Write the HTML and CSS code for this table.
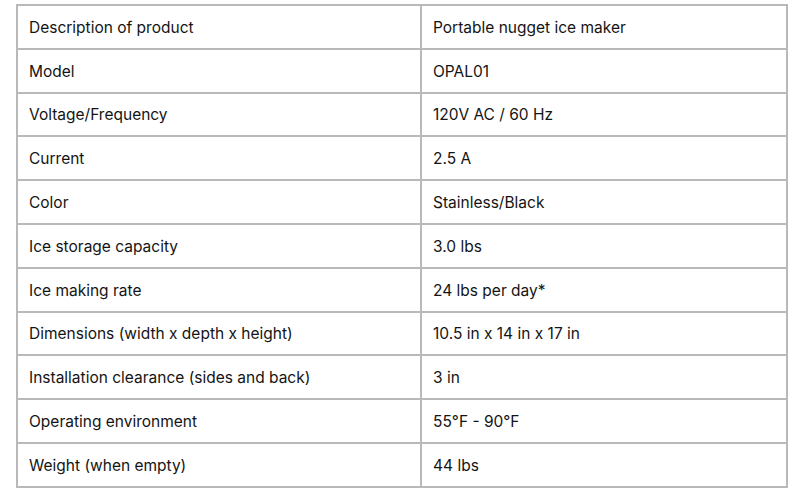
FILE: index.html
```html
<!DOCTYPE html>
<html>
<head>
<meta charset="utf-8">
<link rel="stylesheet" href="styles.css">
</head>
<body>
<table class="spec">
<tbody>
<tr><td class="k">Description of product</td><td class="v">Portable nugget ice maker</td></tr>
<tr><td class="k">Model</td><td class="v">OPAL01</td></tr>
<tr><td class="k">Voltage/Frequency</td><td class="v">120V AC / 60 Hz</td></tr>
<tr><td class="k">Current</td><td class="v">2.5 A</td></tr>
<tr><td class="k">Color</td><td class="v">Stainless/Black</td></tr>
<tr><td class="k">Ice storage capacity</td><td class="v">3.0 lbs</td></tr>
<tr><td class="k">Ice making rate</td><td class="v">24 lbs per day*</td></tr>
<tr><td class="k">Dimensions (width x depth x height)</td><td class="v">10.5 in x 14 in x 17 in</td></tr>
<tr><td class="k">Installation clearance (sides and back)</td><td class="v">3 in</td></tr>
<tr><td class="k">Operating environment</td><td class="v">55°F - 90°F</td></tr>
<tr><td class="k">Weight (when empty)</td><td class="v">44 lbs</td></tr>
</tbody>
</table>
</body>
</html>
```
FILE: styles.css
```css
html, body {
  margin: 0;
  padding: 0;
  background: #ffffff;
}
body {
  padding: 4px 0 0 16px;
  font-family: Inter, "Liberation Sans", sans-serif;
  font-size: 15.5px;
  color: #141414;
}
.spec {
  border-collapse: collapse;
  width: 772px;
  table-layout: fixed;
}
.spec td {
  border: 2px solid #b9b9b9;
  height: 43.8px;
  padding: 2px 11px 0 11px;
  box-sizing: border-box;
  vertical-align: middle;
  line-height: 18px;
  white-space: nowrap;
}
.spec td.k {
  width: 404px;
}
```
